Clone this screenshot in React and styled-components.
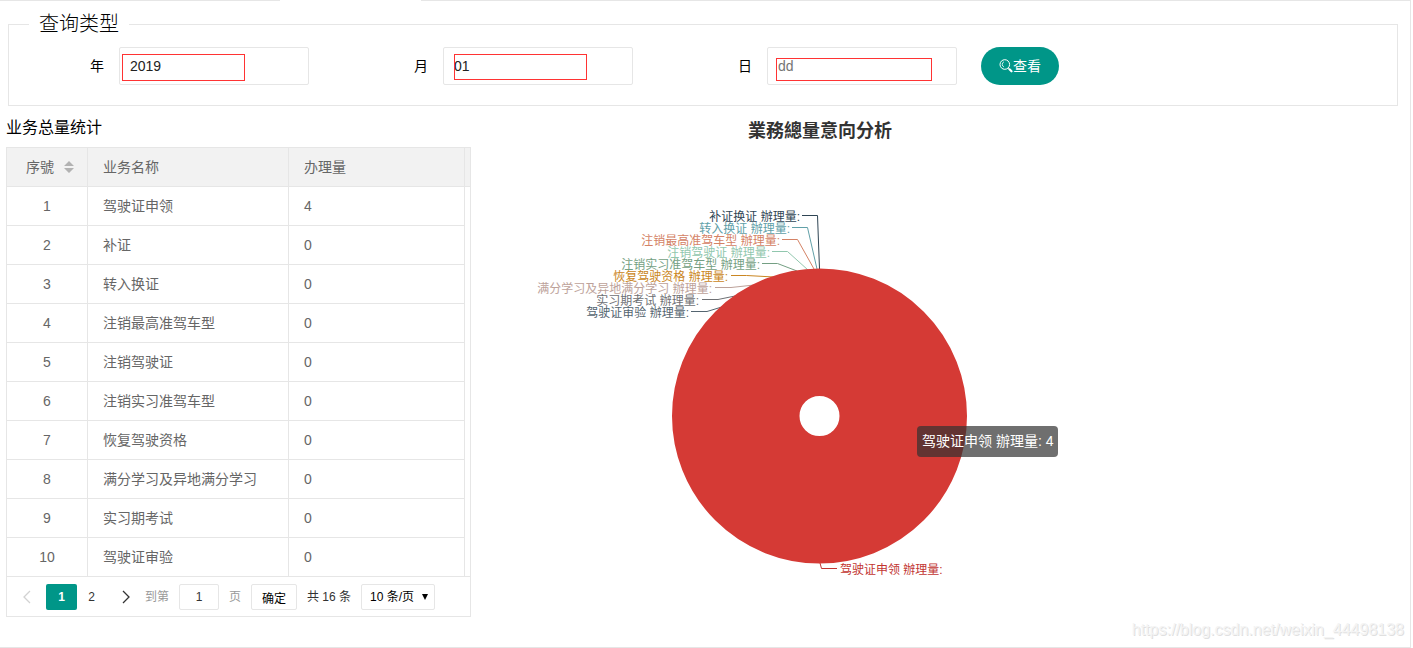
import React, { useState } from 'react';
import styled, { createGlobalStyle } from 'styled-components';

const colors = {
  teal: '#009688',
  border: '#e6e6e6',
  headBg: '#f2f2f2',
  text: '#666',
  mark: '#ff3333',
};

const GlobalStyle = createGlobalStyle`
  * {
    box-sizing: border-box;
  }
  body {
    margin: 0;
    background: #fff;
    color: #000;
    font: 14px/24px 'Liberation Sans', 'Noto Sans CJK SC', sans-serif;
  }
  button,
  input,
  select {
    font-family: inherit;
  }
`;

const Page = styled.div`
  position: relative;
  display: flex;
  flex-direction: column;
  min-height: 100vh;
  margin-right: 2px;
  border-right: 1px solid ${colors.border};
  border-bottom: 1px solid ${colors.border};
`;

const TabLine = styled.div`
  display: flex;
  gap: 141px;
  height: 1px;
  &::before,
  &::after {
    content: '';
    background: ${colors.border};
  }
  &::before {
    width: 280px;
  }
  &::after {
    flex: 1;
  }
`;

const QueryBox = styled.fieldset`
  margin: 9px 12px 0 8px;
  padding: 9px 0 20px;
  border: 1px solid ${colors.border};
  legend {
    margin-left: 20px;
    padding: 0 10px;
    font-size: 20px;
    font-weight: 300;
    line-height: 28px;
  }
`;

const QueryForm = styled.form`
  display: flex;
  gap: 24px;
`;

const Field = styled.div`
  display: flex;
  label {
    width: 110px;
    padding-right: 15px;
    line-height: 38px;
    text-align: right;
  }
`;

const InputWrap = styled.div`
  position: relative;
  width: 190px;
  input {
    display: block;
    width: 100%;
    height: 38px;
    padding: 0 10px;
    border: 1px solid ${colors.border};
    border-radius: 2px;
    outline: none;
    color: #222;
    font-size: 14px;
  }
  input::placeholder {
    color: #757575;
  }
`;

const Mark = styled.span`
  position: absolute;
  left: ${({ $box }) => $box[0]}px;
  top: ${({ $box }) => $box[1]}px;
  width: ${({ $box }) => $box[2]}px;
  height: ${({ $box }) => $box[3]}px;
  border: 1px solid ${colors.mark};
  pointer-events: none;
`;

const SearchButton = styled.button`
  display: flex;
  align-items: center;
  justify-content: center;
  width: 78px;
  height: 38px;
  padding: 0;
  border: 0;
  border-radius: 100px;
  background: ${colors.teal};
  color: #fff;
  font-size: 14px;
  line-height: 24px;
  cursor: pointer;
`;

const Content = styled.main`
  display: flex;
  padding: 10px 0 0 6px;
`;

const Stats = styled.section`
  width: 465px;
  h2 {
    margin: 0 0 7px;
    font-size: 16px;
    font-weight: normal;
    line-height: 24px;
  }
`;

const TableBox = styled.div`
  border: 1px solid ${colors.border};
`;

const Table = styled.table`
  width: 100%;
  table-layout: fixed;
  border-spacing: 0;
  color: ${colors.text};
  th,
  td {
    height: 39px;
    padding: 0 15px;
    border: solid ${colors.border};
    border-width: 0 1px 1px 0;
    font-weight: normal;
    line-height: 28px;
    text-align: left;
  }
  th {
    background: ${colors.headBg};
  }
  th:first-child {
    padding: 0 0 0 19px;
  }
  td:first-child {
    text-align: center;
  }
  tbody tr:last-child td {
    height: 38px;
    border-bottom: 0;
  }
`;

const SortHead = styled.div`
  display: flex;
  align-items: center;
  gap: 10px;
  white-space: nowrap;
`;

const Filler = styled.td`
  && {
    padding: 0;
    border-right: 0;
    border-bottom-width: ${({ $head }) => ($head ? '1px' : '0')};
    background: ${({ $head }) => ($head ? colors.headBg : 'none')};
  }
`;

const Pager = styled.nav`
  display: flex;
  padding: 7px 0 6px;
  border-top: 1px solid ${colors.border};
  color: #333;
  font-size: 12px;
  line-height: 26px;
`;

const PageButton = styled.button`
  display: flex;
  align-items: center;
  justify-content: center;
  width: ${({ $width }) => $width}px;
  height: 26px;
  padding: 0;
  border: 0;
  border-radius: 2px;
  background: ${({ $active }) => ($active ? colors.teal : 'none')};
  color: ${({ $active }) => ($active ? '#fff' : '#333')};
  font-size: 12px;
  font-weight: ${({ $active }) => ($active ? 'bold' : 'normal')};
  &:disabled {
    color: #d2d2d2;
  }
`;

const PagerTools = styled.div`
  display: flex;
  gap: 10px;
  label {
    display: flex;
    gap: 10px;
    color: #999;
  }
  input,
  button,
  select {
    height: 26px;
    padding: 0;
    border: 1px solid ${colors.border};
    border-radius: 2px;
    background: #fff;
    color: #333;
    font-size: 12px;
  }
  input {
    width: 40px;
    text-align: center;
  }
  button {
    width: 46px;
    color: #000;
  }
`;

const SelectWrap = styled.div`
  position: relative;
  select {
    display: block;
    width: 74px;
    padding: 0 8px;
    appearance: none;
    color: #000;
  }
  svg {
    position: absolute;
    right: 7px;
    top: 10px;
    pointer-events: none;
  }
`;

const ChartPanel = styled.section`
  position: relative;
  width: 698px;
  svg {
    display: block;
    font-size: 12px;
  }
`;

const ChartTitle = styled.h2`
  position: absolute;
  left: 0;
  right: 0;
  top: 3px;
  margin: 0;
  color: #333;
  font-size: 18px;
  line-height: 24px;
  text-align: center;
`;

const Tooltip = styled.div`
  position: absolute;
  left: 446px;
  top: 310px;
  padding: 5px;
  border-radius: 4px;
  background: rgba(50, 50, 50, 0.7);
  color: #fff;
  line-height: 21px;
  white-space: nowrap;
`;

const Watermark = styled.div`
  position: absolute;
  right: 6px;
  bottom: 5px;
  color: #f4f4f4;
  font-size: 16px;
  text-shadow: 1px 1px 0 #e0e0e0;
`;

const fields = [
  { id: 'year', label: '年', value: '2019', mark: [3, 7, 123, 27] },
  { id: 'month', label: '月', value: '01', mark: [11, 7, 133, 26] },
  { id: 'day', label: '日', value: '', placeholder: 'dd', mark: [9, 11, 156, 23] },
];

const rows = [
  ['驾驶证申领', 4],
  ['补证', 0],
  ['转入换证', 0],
  ['注销最高准驾车型', 0],
  ['注销驾驶证', 0],
  ['注销实习准驾车型', 0],
  ['恢复驾驶资格', 0],
  ['满分学习及异地满分学习', 0],
  ['实习期考试', 0],
  ['驾驶证审验', 0],
];

// coordinates are relative to the centre of the pie
const labels = [
  { name: '补证换证', color: '#2f4554', x: -20, y: -200, line: '-18,-200.5 -2.5,-200.5 -0.5,-147' },
  { name: '转入换证', color: '#61a0a8', x: -30, y: -188, line: '-28,-188.5 -12.5,-188.5 -3,-147' },
  { name: '注销最高准驾车型', color: '#d48265', x: -40, y: -176, line: '-38,-176.5 -22.5,-176.5 -6,-147' },
  { name: '注销驾驶证', color: '#91c7ae', x: -50, y: -164, line: '-48,-164.5 -32.5,-164.5 -12,-146' },
  { name: '注销实习准驾车型', color: '#749f83', x: -60, y: -152, line: '-58,-152.5 -42.5,-152.5 -23,-145' },
  { name: '恢复驾驶资格', color: '#ca8622', x: -92, y: -140, line: '-89,-140.5 -73.5,-140.5 -46,-139' },
  { name: '满分学习及异地满分学习', color: '#bda29a', x: -108, y: -128, line: '-105,-128.5 -89,-128.5 -66,-131' },
  { name: '实习期考试', color: '#6e7074', x: -121, y: -116, line: '-118,-116.5 -102,-116.5 -85,-120' },
  { name: '驾驶证审验', color: '#546570', x: -131, y: -104, line: '-129,-104.5 -113,-104.5 -95,-110' },
];

const SearchIcon = () => (
  <svg width="14" height="14" viewBox="0 0 14 14" fill="none" stroke="currentColor" aria-hidden="true">
    <circle cx="5.8" cy="5.5" r="4.8" strokeWidth="1" />
    <path d="M5 2.8a2.8 2.8 0 0 0 0 5.2" strokeWidth="0.8" />
    <path d="M9.2 9l1.3 1.3" strokeWidth="1" />
    <path d="M10.5 10.3l2 2" strokeWidth="2.2" strokeLinecap="round" />
  </svg>
);

const Arrow = ({ d }) => (
  <svg width="9" height="14" viewBox="0 0 9 14" fill="none" stroke="currentColor" strokeWidth="1.3" aria-hidden="true">
    <path d={d} />
  </svg>
);

const SortIcon = () => (
  <svg width="10" height="12" viewBox="0 0 10 12" fill="#b2b2b2" aria-hidden="true">
    <path d="M0 5l5-5 5 5zM0 7h10l-5 5z" />
  </svg>
);

const QueryField = ({ id, label, value, placeholder, mark }) => (
  <Field>
    <label htmlFor={id}>{label}</label>
    <InputWrap>
      <input id={id} type="text" defaultValue={value} placeholder={placeholder} />
      <Mark $box={mark} />
    </InputWrap>
  </Field>
);

const StatsTable = () => (
  <Table>
    <colgroup>
      <col width="81" />
      <col width="201" />
      <col width="176" />
      <col />
    </colgroup>
    <thead>
      <tr>
        <th>
          <SortHead>
            序號
            <SortIcon />
          </SortHead>
        </th>
        <th>业务名称</th>
        <th>办理量</th>
        <Filler $head />
      </tr>
    </thead>
    <tbody>
      {rows.map(([name, count], i) => (
        <tr key={name}>
          <td>{i + 1}</td>
          <td>{name}</td>
          <td>{count}</td>
          <Filler />
        </tr>
      ))}
    </tbody>
  </Table>
);

const PieChart = () => (
  <ChartPanel>
    <ChartTitle>業務總量意向分析</ChartTitle>
    <svg width="698" height="500" viewBox="-349 -300 698 500">
      {labels.map(({ name, color, x, y, line }) => (
        <g key={name}>
          <polyline points={line} fill="none" stroke={color} />
          <text x={x} y={y + 5} fill={color} textAnchor="end">
            {name} 辦理量:
          </text>
        </g>
      ))}
      <polyline points="0,147 1.5,152.5 17,152.5" fill="none" stroke="#c23531" />
      <text x="20" y="158" fill="#c23531">
        驾驶证申领 辦理量:
      </text>
      <circle cx="-0.5" cy="0" r="83.75" fill="none" stroke="#d53a35" strokeWidth="127.5" />
    </svg>
    <Tooltip>驾驶证申领 辦理量: 4</Tooltip>
  </ChartPanel>
);

const App = () => {
  const [page, setPage] = useState(1);

  return (
    <>
      <GlobalStyle />
      <Page>
        <TabLine />
        <QueryBox>
          <legend>查询类型</legend>
          <QueryForm onSubmit={(e) => e.preventDefault()}>
            {fields.map((field) => (
              <QueryField key={field.id} {...field} />
            ))}
            <SearchButton type="submit">
              <SearchIcon />
              查看
            </SearchButton>
          </QueryForm>
        </QueryBox>

        <Content>
          <Stats>
            <h2>业务总量统计</h2>
            <TableBox>
              <StatsTable />
              <Pager>
                <PageButton $width={39} disabled={page === 1} onClick={() => setPage(1)} aria-label="上一页">
                  <Arrow d="M8 1L2 7l6 6" />
                </PageButton>
                <PageButton $width={31} $active={page === 1} onClick={() => setPage(1)}>
                  1
                </PageButton>
                <PageButton $width={29} $active={page === 2} onClick={() => setPage(2)}>
                  2
                </PageButton>
                <PageButton $width={39} disabled={page === 2} onClick={() => setPage(2)} aria-label="下一页">
                  <Arrow d="M2 1l6 6-6 6" />
                </PageButton>
                <PagerTools>
                  <label>
                    到第
                    <input type="text" defaultValue="1" />页
                  </label>
                  <button type="button">确定</button>
                  <span>共 16 条</span>
                  <SelectWrap>
                    <select aria-label="每页条数" defaultValue="10">
                      <option value="10">10 条/页</option>
                      <option value="20">20 条/页</option>
                    </select>
                    <svg width="6" height="6" viewBox="0 0 6 6" aria-hidden="true">
                      <path d="M0 0h6L3 6z" />
                    </svg>
                  </SelectWrap>
                </PagerTools>
              </Pager>
            </TableBox>
          </Stats>
          <PieChart />
        </Content>
        <Watermark>https://blog.csdn.net/weixin_44498138</Watermark>
      </Page>
    </>
  );
};

export default App;
